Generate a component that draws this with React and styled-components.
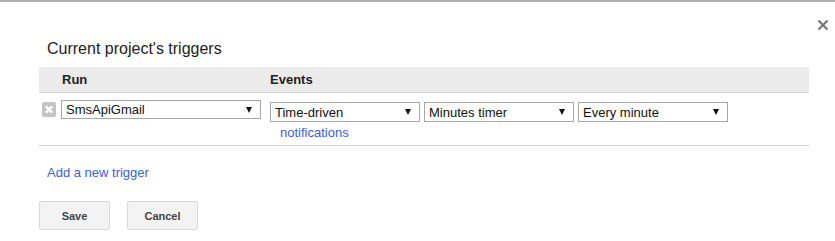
import styled, { createGlobalStyle } from "styled-components";

const GlobalStyle = createGlobalStyle`
    body {
        margin: 0;
        background: #fff;
        font-family: "Liberation Sans", Arial, sans-serif;
        color: #222;
    }
`;

const Dialog = styled.div`
    position: relative;
    height: 241px;
    box-sizing: border-box;
    border-top: 2px solid #adadad;
    padding: 38px 26px 0 39px;
`;

const CloseButton = styled.button`
    position: absolute;
    top: 17px;
    right: 6px;
    width: 12px;
    height: 12px;
    padding: 0;
    border: 0;
    background: none;
    display: flex;
    cursor: pointer;
`;

const Title = styled.h2`
    margin: 0 0 9px 8px;
    font-size: 16px;
    line-height: 18px;
    font-weight: normal;
    color: #222;
`;

const HeaderRow = styled.div`
    display: grid;
    grid-template-columns: 231px 1fr;
    height: 25px;
    line-height: 25px;
    background: #ebebeb;
    border-bottom: 1px solid #d3d3d3;
    font-size: 13px;
    font-weight: bold;
    color: #222;
`;

const HeaderCell = styled.div`
    padding-left: ${(p) => p.$indent || 0}px;
`;

const TriggerRow = styled.div`
    display: grid;
    grid-template-columns: 231px 1fr;
    padding: 7px 0 5px;
    border-bottom: 1px solid #d3d3d3;
`;

const RunCell = styled.div`
    display: flex;
    align-items: flex-start;
    gap: 5px;
    padding-left: 3px;
`;

const DeleteButton = styled.button`
    margin-top: 2px;
    width: 14px;
    height: 15px;
    padding: 0;
    border: 0;
    background: none;
    display: flex;
    cursor: pointer;
`;

const EventsCell = styled.div`
    display: flex;
    flex-direction: column;
    padding-top: 2px;
`;

const SelectGroup = styled.div`
    display: flex;
    gap: 4px;
`;

const Select = styled.div`
    box-sizing: border-box;
    width: ${(p) => p.$width}px;
    height: ${(p) => p.$height}px;
    border: 1px solid #a6a6a6;
    background: #fff;
    display: flex;
    align-items: center;
    justify-content: space-between;
    padding: 0 8px 0 4px;
    font-size: 13px;
    color: #111;
`;

const Arrow = styled.span`
    width: 0;
    height: 0;
    border-left: 3px solid transparent;
    border-right: 3px solid transparent;
    border-top: 6px solid #111;
`;

const Link = styled.a`
    font-size: 13px;
    line-height: 15px;
    color: #3a62d4;
    text-decoration: none;
    cursor: pointer;
`;

const NotificationsLink = styled(Link)`
    margin: 3px 0 0 10px;
`;

const AddTrigger = styled(Link)`
    display: block;
    margin: 19px 0 0 8px;
`;

const Actions = styled.div`
    display: flex;
    gap: 17px;
    margin-top: 21px;
`;

const Button = styled.button`
    box-sizing: border-box;
    width: 71px;
    height: 29px;
    border: 1px solid #dadada;
    border-radius: 2px;
    background: #f3f3f3;
    font-family: "Liberation Sans", Arial, sans-serif;
    font-size: 11px;
    font-weight: bold;
    color: #444;
    cursor: pointer;
`;

function Dropdown({ value, width, height = 20 }) {
    return (
        <Select $width={width} $height={height}>
            <span>{value}</span>
            <Arrow />
        </Select>
    );
}

export default function App() {
    return (
        <>
            <GlobalStyle />
            <Dialog>
                <CloseButton aria-label="Close">
                    <svg width="12" height="12" viewBox="0 0 12 12">
                        <path d="M1.5 1.5 L10.5 10.5 M10.5 1.5 L1.5 10.5" stroke="#777" strokeWidth="2.2" />
                    </svg>
                </CloseButton>
                <Title>Current project's triggers</Title>
                <HeaderRow>
                    <HeaderCell $indent={23}>Run</HeaderCell>
                    <HeaderCell>Events</HeaderCell>
                </HeaderRow>
                <TriggerRow>
                    <RunCell>
                        <DeleteButton aria-label="Delete trigger">
                            <svg width="14" height="15" viewBox="0 0 14 15">
                                <rect x="0" y="0" width="14" height="15" rx="2" fill="#c4c4c4" />
                                <path d="M3.8 4.3 L10.2 10.7 M10.2 4.3 L3.8 10.7" stroke="#fff" strokeWidth="2.4" />
                            </svg>
                        </DeleteButton>
                        <Dropdown value="SmsApiGmail" width={200} height={19} />
                    </RunCell>
                    <EventsCell>
                        <SelectGroup>
                            <Dropdown value="Time-driven" width={150} />
                            <Dropdown value="Minutes timer" width={150} />
                            <Dropdown value="Every minute" width={150} />
                        </SelectGroup>
                        <NotificationsLink>notifications</NotificationsLink>
                    </EventsCell>
                </TriggerRow>
                <AddTrigger>Add a new trigger</AddTrigger>
                <Actions>
                    <Button>Save</Button>
                    <Button>Cancel</Button>
                </Actions>
            </Dialog>
        </>
    );
}
